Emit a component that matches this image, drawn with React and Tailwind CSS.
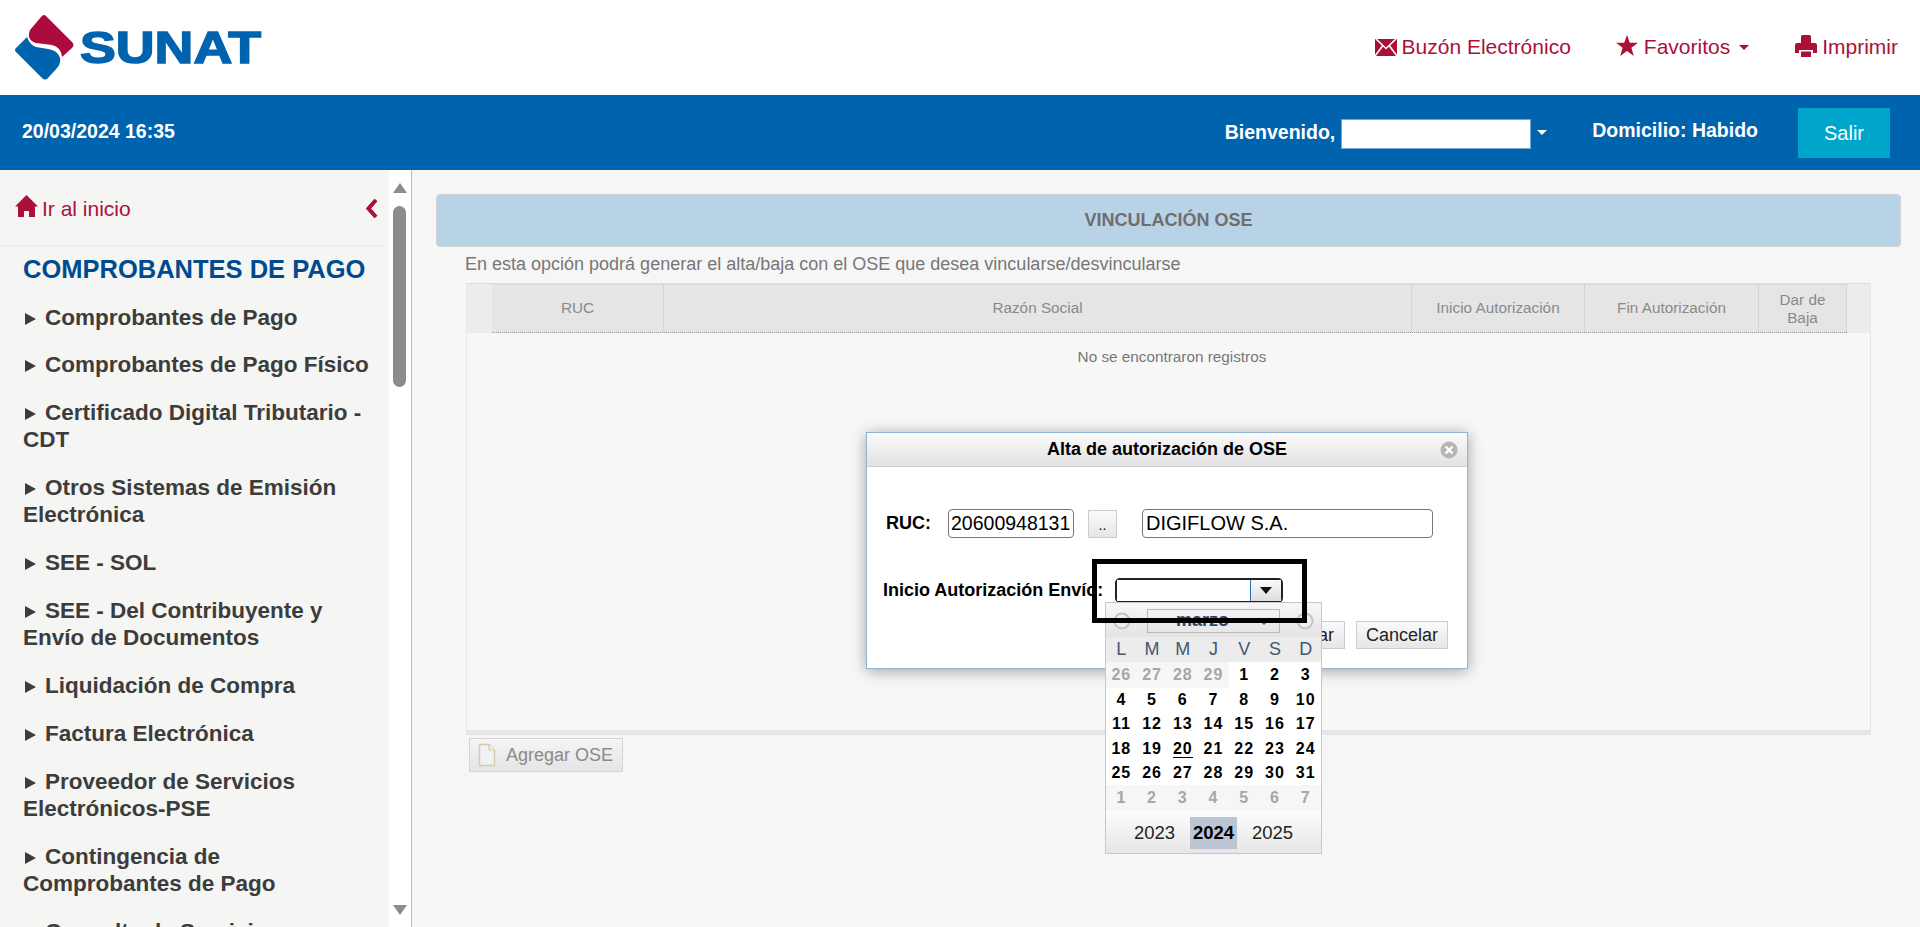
const MENU = [
  ['Comprobantes de Pago'],
  ['Comprobantes de Pago Físico'],
  ['Certificado Digital Tributario -', 'CDT'],
  ['Otros Sistemas de Emisión', 'Electrónica'],
  ['SEE - SOL'],
  ['SEE - Del Contribuyente y', 'Envío de Documentos'],
  ['Liquidación de Compra'],
  ['Factura Electrónica'],
  ['Proveedor de Servicios', 'Electrónicos-PSE'],
  ['Contingencia de', 'Comprobantes de Pago'],
  ['Consulta de Servicios'],
];

const WEEKS = [
  [26, 27, 28, 29, 1, 2, 3],
  [4, 5, 6, 7, 8, 9, 10],
  [11, 12, 13, 14, 15, 16, 17],
  [18, 19, 20, 21, 22, 23, 24],
  [25, 26, 27, 28, 29, 30, 31],
  [1, 2, 3, 4, 5, 6, 7],
];

function Logo() {
  return (
    <svg width="270" height="95" viewBox="0 0 270 95">
      <path d="M41 17 Q44 13 47 17 L72 42 Q75 45 72 48 L62 57 Q61 47 52 45 L36 43 Q26 40 30 30 Z" fill="#ac0c3c" />
      <path d="M27 37 L16 48 Q14 50 16 52 L42 78 Q45 81 48 78 L57 68 Q63 61 58 54 Q55 50 48 49 L36 47 Q30 45 27 37 Z" fill="#0063ae" />
      <text x="80" y="63" fontFamily="Liberation Sans" fontWeight="700" fontSize="45" fill="#0063ae" stroke="#0063ae" strokeWidth="1.5" textLength="181" lengthAdjust="spacingAndGlyphs">SUNAT</text>
    </svg>
  );
}

function Mail() {
  return (
    <svg width="22" height="17" viewBox="0 0 22 17">
      <path d="M0 0H22V17H0Z" fill="#ac1039" />
      <path d="M1 0L11 9.5L21 0M0 17L7.5 7M22 17L14.5 7" stroke="#fff" strokeWidth="1.6" fill="none" />
    </svg>
  );
}

function Star() {
  return (
    <svg width="22" height="21" viewBox="0 0 22 21">
      <path d="M11 0L13.8 7.8H22L15.4 12.8L17.8 21L11 16L4.2 21L6.6 12.8L0 7.8H8.2Z" fill="#ac1039" />
    </svg>
  );
}

function Printer() {
  return (
    <svg width="22" height="22" viewBox="0 0 22 22">
      <path d="M6 1.5Q6 0 7.5 0H14.5Q16 0 16 1.5V8H6Z" fill="#ac1039" />
      <path d="M0 10Q0 8 2 8H20Q22 8 22 10V18H18V15H4V18H0Z" fill="#ac1039" />
      <path d="M6 16.5H16V22H6Z" fill="#ac1039" />
    </svg>
  );
}

function Home() {
  return (
    <svg width="23" height="22" viewBox="0 0 23 22">
      <path d="M11.5 0L23 11.5H20V22H14V16H9V22H3V11.5H0Z" fill="#ac1039" />
    </svg>
  );
}

function Chevron() {
  return (
    <svg width="14" height="19" viewBox="0 0 14 19">
      <path d="M10 1L2.5 9.5L10 18" fill="none" stroke="#ac1039" strokeWidth="4" />
    </svg>
  );
}

function Caret({ className }) {
  return <span className={`w-0 h-0 border-x-[5px] border-x-transparent border-t-[5px] ${className}`} />;
}

function Circle() {
  return (
    <svg width="18" height="18" viewBox="0 0 18 18">
      <circle cx="9" cy="9" r="7.5" fill="#f0f0f0" stroke="#c4c4c4" strokeWidth="2" />
    </svg>
  );
}

function Calendar() {
  return (
    <div className="absolute left-[238px] top-[169px] w-[217px] h-[252px] border border-[#c8c8c8] bg-white flex flex-col z-10">
      <div className="h-[34px] shrink-0 bg-gradient-to-b from-[#f7f7f7] to-[#e4e4e4] flex items-center justify-between px-[7px] pt-[2px]">
        <Circle />
        <div className="w-[133px] h-[24px] border border-[#b8b8b8] flex items-center justify-center relative pr-[22px]">
          <span className="text-[18px] font-bold text-[#2c4766] leading-none -mt-[2px]">marzo</span>
          <Caret className="absolute right-[10px] top-[10px] border-t-[#555]" />
        </div>
        <Circle />
      </div>
      <div className="grid grid-cols-7 h-[25px] shrink-0 bg-[#ececec] text-[18px] text-[#44586f] text-center leading-[25px]">
        {['L', 'M', 'M', 'J', 'V', 'S', 'D'].map((d, i) => <span key={i}>{d}</span>)}
      </div>
      {WEEKS.map((w, ri) => (
        <div key={ri} className="grid grid-cols-7 h-[24.6px] shrink-0 text-center text-[16px] font-bold tracking-[1px] leading-[26px]">
          {w.map((d, i) => {
            const muted = (ri === 0 && i < 4) || ri === 5;
            return (
              <span key={i} className={muted ? 'bg-[#f6f6f6] text-[#a6a6a6]' : 'text-black'}>
                {ri === 3 && d === 20 ? <span className="border-b border-black">{d}</span> : d}
              </span>
            );
          })}
        </div>
      ))}
      <div className="flex-1 bg-gradient-to-b from-[#fdfdfd] to-[#e6e6e6] flex items-start justify-center gap-[12px] pt-[7px] text-[18.5px] text-[#222]">
        <span className="w-[47px] h-[32px] leading-[32px] text-center">2023</span>
        <span className="w-[47px] h-[32px] leading-[32px] text-center font-bold bg-[#bbc4d3] text-black">2024</span>
        <span className="w-[47px] h-[32px] leading-[32px] text-center">2025</span>
      </div>
    </div>
  );
}

function AltaDialog() {
  return (
    <div className="absolute left-[866px] top-[432px] w-[602px] h-[237px] bg-white border border-[#8fb4d4] shadow-[0_2px_14px_rgba(0,0,0,0.35)] flex flex-col text-black">
      <div className="h-[34px] shrink-0 bg-gradient-to-b from-[#fafafa] to-[#e2e2e2] border-b border-[#d0d0d0] flex items-center justify-center relative">
        <span className="text-[18px] font-bold">Alta de autorización de OSE</span>
        <svg className="absolute right-[9px] top-[8px]" width="18" height="18" viewBox="0 0 18 18">
          <circle cx="9" cy="9" r="8.5" fill="#b5b5b5" />
          <path d="M5.5 5.5L12.5 12.5M12.5 5.5L5.5 12.5" stroke="#fff" strokeWidth="2.4" />
        </svg>
      </div>
      <div className="flex items-center mt-[42px] pl-[19px] h-[29px]">
        <span className="w-[62px] text-[18px] font-bold">RUC:</span>
        <div className="w-[126px] h-[29px] border border-[#777] rounded-[4px] px-[2px] text-[19.5px] leading-[27px] whitespace-nowrap overflow-hidden">20600948131</div>
        <div className="ml-[14px] w-[29px] h-[28px] border border-[#ccc] bg-gradient-to-b from-[#fafafa] to-[#e6e6e6] text-[14px] text-center leading-[28px]">..</div>
        <div className="ml-[25px] w-[291px] h-[29px] border border-[#777] rounded-[4px] px-[3px] text-[20px] leading-[27px]">DIGIFLOW S.A.</div>
      </div>
      <div className="flex items-center mt-[39px] pl-[16px] h-[26px]">
        <span className="w-[232px] text-[18px] font-bold whitespace-nowrap">Inicio Autorización Envío:</span>
        <div className="w-[168px] h-[25px] border-2 border-[#222] rounded-[5px] flex">
          <div className="flex-1 bg-white" />
          <div className="w-[31px] border-l border-[#2f6db5] bg-gradient-to-b from-[#fafafa] to-[#dedede] flex items-center justify-center">
            <Caret className="border-x-[6px] border-t-[7px] border-t-[#111]" />
          </div>
        </div>
      </div>
      <div className="flex justify-end gap-[11px] mt-[18px] pr-[19px] text-[18px] text-[#222]">
        <div className="w-[105px] h-[28px] border border-[#ccc] bg-gradient-to-b from-[#fafafa] to-[#e6e6e6] text-right pr-[10px] leading-[26px]">Grabar</div>
        <div className="w-[92px] h-[28px] border border-[#ccc] bg-gradient-to-b from-[#fafafa] to-[#e6e6e6] text-center leading-[26px]">Cancelar</div>
      </div>
      <Calendar />
      {/* black box marked on the screenshot */}
      <div className="absolute left-[225px] top-[126px] w-[215px] h-[64px] border-[5px] border-black z-20" />
    </div>
  );
}

export default function App() {
  return (
    <div className="relative h-[927px] overflow-hidden flex flex-col bg-[#f6f6f6] font-['Liberation_Sans',sans-serif]">
      {/* top header */}
      <header className="h-[95px] shrink-0 bg-white flex items-center justify-between pr-[22px] text-[#ac1039] text-[21px]">
        <Logo />
        <div className="flex items-center -mt-[1px]">
          <Mail />
          <span className="ml-[5px]">Buzón Electrónico</span>
          <span className="ml-[45px] -mt-[4px]"><Star /></span>
          <span className="ml-[6px]">Favoritos</span>
          <Caret className="ml-[9px] border-t-[#ac1039]" />
          <span className="ml-[46px] -mt-[3px]"><Printer /></span>
          <span className="ml-[5px]">Imprimir</span>
        </div>
      </header>

      {/* blue bar */}
      <div className="h-[75px] shrink-0 bg-[#0063ae] flex items-center text-white font-bold">
        <span className="ml-[22px] -mt-[1px] text-[19.5px]">20/03/2024 16:35</span>
        <span className="ml-auto text-[19.5px]">Bienvenido,</span>
        <div className="ml-[6px] w-[190px] h-[30px] bg-white border border-[#6ea6d6] mt-[3px]" />
        <Caret className="ml-[6px] border-t-white" />
        <span className="ml-[45px] text-[19.5px] -mt-[4px]">Domicilio: Habido</span>
        <div className="ml-[40px] mr-[30px] w-[92px] h-[50px] bg-[#00a5cc] flex items-center justify-center text-[20px] font-normal">Salir</div>
      </div>

      <div className="flex-1 flex min-h-0">
        {/* sidebar */}
        <aside className="w-[389px] shrink-0 bg-[#f5f5f3] overflow-hidden">
          <div className="h-[76px] border-b border-[#e9e9e9] mr-[3px] flex items-center justify-between pl-[15px] pr-[6px] text-[#ac1039] text-[21px] pt-[2px]">
            <div className="flex items-center gap-[4px]">
              <span className="-mt-[6px]"><Home /></span>
              <span>Ir al inicio</span>
            </div>
            <Chevron />
          </div>
          <h2 className="ml-[23px] mt-[8px] text-[25.5px] leading-[30px] font-bold text-[#004a8f] whitespace-nowrap">COMPROBANTES DE PAGO</h2>
          <ul className="mt-[19.5px] pl-[23px] pr-[10px] text-[22.5px] font-bold text-[#3c3c3c] leading-[27.3px]">
            {MENU.map((m) => (
              <li key={m[0]} className="mb-[20.5px] whitespace-nowrap">
                <div className="flex items-center">
                  <span className="w-0 h-0 border-y-[6.5px] border-y-transparent border-l-[11px] border-l-[#3c3c3c] mt-[3px] ml-[2px] mr-[9px]" />
                  {m[0]}
                </div>
                {m[1] && <div>{m[1]}</div>}
              </li>
            ))}
          </ul>
        </aside>

        {/* scrollbar */}
        <div className="w-[23px] shrink-0 bg-white border-r border-[#bbbbbb] flex flex-col items-center pt-[13px] pb-[12px] pr-[1px]">
          <span className="w-0 h-0 border-x-[7px] border-x-transparent border-b-[10px] border-b-[#8c8c8c]" />
          <div className="w-[13px] h-[181px] rounded-[7px] bg-[#8c8c8c] mt-[13px]" />
          <span className="mt-auto w-0 h-0 border-x-[7px] border-x-transparent border-t-[10px] border-t-[#8c8c8c]" />
        </div>

        {/* main */}
        <main className="flex-1 min-w-0 pt-[24px] pl-[24px] pr-[19px]">
          <div className="h-[53px] bg-[#b8d2e6] border border-[#d2d2d2] rounded-[4px] flex items-center justify-center text-[18px] font-bold text-[#6e6e6e]">
            VINCULACIÓN OSE
          </div>
          <p className="ml-[29px] mt-[7px] text-[18px] leading-[20px] text-[#777] whitespace-nowrap">En esta opción podrá generar el alta/baja con el OSE que desea vincularse/desvincularse</p>
          <div className="ml-[30px] mr-[30px] mt-[9px] h-[452px] border-x border-[#e6e6e6] border-b-[5px] border-b-[#e6e6e6] bg-[#f7f7f7]">
            <div className="h-[50px] bg-[#ececec] border-t border-t-[#dcdcdc] flex text-[15.3px] text-[#8a8a8a] text-center">
              <div className="w-[25px] shrink-0" />
              <div className="flex flex-1 bg-[#e5e5e5] border-t border-t-[#d4d4d4] border-b border-dotted border-b-[#999] [&>div]:flex [&>div]:items-center [&>div]:justify-center [&>div]:border-r [&>div]:border-dotted [&>div]:border-r-[#c4c4c4]">
                <div className="w-[172px]">RUC</div>
                <div className="w-[748px]">Razón Social</div>
                <div className="w-[173px]">Inicio Autorización</div>
                <div className="w-[174px]">Fin Autorización</div>
                <div className="flex-1 leading-[18px]">Dar de<br />Baja</div>
              </div>
              <div className="w-[23px] shrink-0" />
            </div>
            <p className="mt-[13px] pl-[7px] text-center text-[15.3px] text-[#777]">No se encontraron registros</p>
          </div>
          <div className="ml-[33px] mt-[3px] w-[154px] h-[34px] bg-gradient-to-b from-[#f5f5f5] to-[#e4e4e4] border border-[#d4d4d4] flex items-center pl-[8px] text-[18px] text-[#8a8a8a]">
            <svg width="18" height="24" viewBox="0 0 18 24">
              <path d="M1.5 1.5H11L16.5 7V22.5H1.5Z" fill="#eef1f6" stroke="#d8cba8" strokeWidth="1.5" />
              <path d="M11 1.5V7H16.5" fill="#f6f2e4" stroke="#d8cba8" strokeWidth="1.2" />
            </svg>
            <span className="ml-[10px]">Agregar OSE</span>
          </div>
        </main>
      </div>

      <AltaDialog />
    </div>
  );
}
